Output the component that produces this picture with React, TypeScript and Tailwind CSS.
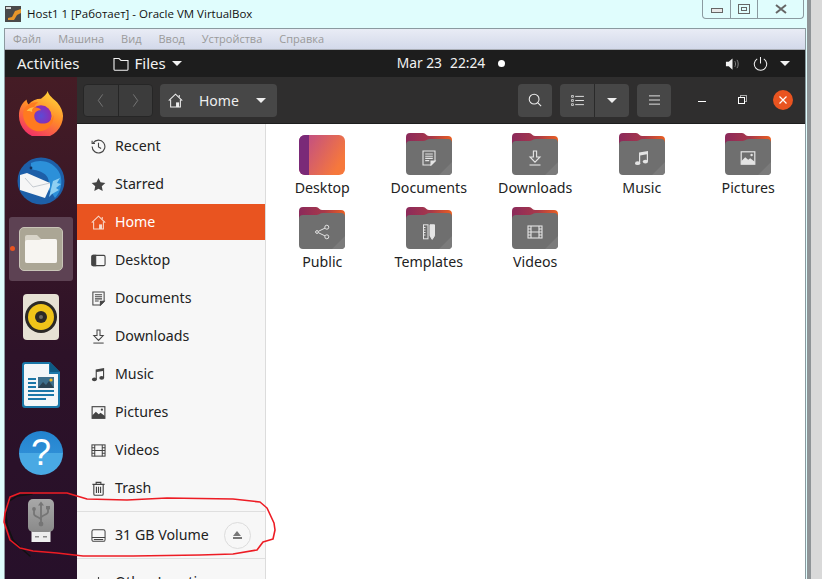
import React from 'react';

const FONT = "font-['Noto_Sans',sans-serif]";

type IconProps = { className?: string };

function HomeIcon({ className }: IconProps) {
  return (
    <svg viewBox="0 0 16 16" className={className} fill="none" stroke="currentColor" strokeWidth="1.1">
      <path d="M.8 8.2 8 1.2l7.2 7" />
      <path d="M2.8 7v8h10.4V7" />
      <path d="M12 2v2.6" />
      <rect x="8.6" y="10" width="3.2" height="5" fill="currentColor" stroke="none" />
    </svg>
  );
}

function ClockIcon({ className }: IconProps) {
  return (
    <svg viewBox="0 0 16 16" className={className} fill="none" stroke="currentColor" strokeWidth="1.2">
      <path d="M2.4 4.2A6.8 6.8 0 1 1 1.2 8" />
      <path d="M1.2 1.8v3h3" />
      <path d="M8 4v4.4l2.8 1.8" />
    </svg>
  );
}

function StarIcon({ className }: IconProps) {
  return (
    <svg viewBox="0 0 16 16" className={className} fill="currentColor">
      <path d="M8 1l2.2 4.7 5.1.6-3.8 3.5 1 5.1L8 12.4l-4.5 2.5 1-5.1L.7 6.3l5.1-.6z" />
    </svg>
  );
}

function DesktopIcon({ className }: IconProps) {
  return (
    <svg viewBox="0 0 16 16" className={className} fill="none" stroke="currentColor" strokeWidth="1.2">
      <rect x="1" y="2.5" width="14" height="11" rx="1.5" />
      <path d="M1 3.5a1 1 0 0 1 1-1h3v11H2a1 1 0 0 1-1-1z" fill="currentColor" />
    </svg>
  );
}

function DocIcon({ className }: IconProps) {
  return (
    <svg viewBox="0 0 16 16" className={className} fill="none" stroke="currentColor" strokeWidth="1.1">
      <path d="M2 1h12v10l-4 4H2z" />
      <path d="M4.2 4h7.6M4.2 6.2h7.6M4.2 8.4h7.6M4.2 10.6h4" />
      <path d="M10 15v-4h4z" fill="currentColor" />
    </svg>
  );
}

function DownloadIcon({ className }: IconProps) {
  return (
    <svg viewBox="0 0 16 16" className={className} fill="none" stroke="currentColor" strokeWidth="1.1">
      <path d="M6.4 1h3.2v6H13l-5 5.2L3 7h3.4z" />
      <path d="M2.5 15h11" />
    </svg>
  );
}

function MusicIcon({ className }: IconProps) {
  return (
    <svg viewBox="0 0 16 16" className={className} fill="currentColor">
      <path d="M5 2.6 14 1v10.6h-1.2V4.2L6.2 5.4v8H5z" />
      <ellipse cx="3.6" cy="13.2" rx="2.6" ry="1.9" />
      <ellipse cx="11.4" cy="11.6" rx="2.6" ry="1.9" />
    </svg>
  );
}

function PictureIcon({ className }: IconProps) {
  return (
    <svg viewBox="0 0 16 16" className={className} fill="none" stroke="currentColor" strokeWidth="1.2">
      <rect x="1.2" y="1.8" width="13.6" height="12.4" />
      <path d="M1.2 14.2v-3l4-4 3 2.6 2-1.6 4.6 3.6v2.4z" fill="currentColor" stroke="none" />
      <circle cx="11.6" cy="5" r="1.2" fill="currentColor" stroke="none" />
    </svg>
  );
}

function VideoIcon({ className }: IconProps) {
  return (
    <svg viewBox="0 0 16 16" className={className} fill="none" stroke="currentColor" strokeWidth="1.1">
      <rect x="1" y="2" width="14" height="12" />
      <path d="M4 2v12M12 2v12M4 8h8M1 5h3M1 8h3M1 11h3M12 5h3M12 8h3M12 11h3" />
    </svg>
  );
}

function TrashIcon({ className }: IconProps) {
  return (
    <svg viewBox="0 0 16 16" className={className} fill="none" stroke="currentColor" strokeWidth="1.2">
      <path d="M1.5 3.6h13M5.5 3.4V1.4h5v2" />
      <path d="M3 3.6v10.2c0 .8.5 1.4 1.3 1.4h7.4c.8 0 1.3-.6 1.3-1.4V3.6" />
      <path d="M5.8 6v6.8M8 6v6.8M10.2 6v6.8" />
    </svg>
  );
}

function DriveIcon({ className }: IconProps) {
  return (
    <svg viewBox="0 0 16 16" className={className} fill="none" stroke="currentColor" strokeWidth="1.1">
      <rect x="1" y="1.8" width="14" height="12.4" rx="1.8" />
      <path d="M1 10.2h14M3 12.2h10" />
    </svg>
  );
}

function ShareIcon({ className }: IconProps) {
  return (
    <svg viewBox="0 0 16 16" className={className} fill="none" stroke="currentColor" strokeWidth="1">
      <circle cx="12.8" cy="3.2" r="2" />
      <circle cx="12.8" cy="12.8" r="2" />
      <circle cx="3" cy="8" r="1.4" />
      <path d="M4.4 7.3l6.6-3.2M4.4 8.7l6.6 3.2" />
    </svg>
  );
}

function TemplateIcon({ className }: IconProps) {
  return (
    <svg viewBox="0 0 16 16" className={className} fill="none" stroke="currentColor" strokeWidth="1">
      <rect x="2.5" y=".8" width="4.5" height="14" />
      <path d="M2.5 3.5h2M2.5 6h2M2.5 8.5h2M2.5 11h2" />
      <path d="M9 .8h4.5v11L11.2 15.4 9 11.8z" fill="currentColor" />
    </svg>
  );
}

// folder in the Yaru look, tab gradient behind and grey body on top
function Folder({ id, children }: { id: string; children: React.ReactNode }) {
  return (
    <div className="relative w-[46px] h-[42px]">
      <svg viewBox="0 0 46 42" className="block w-[46px] h-[42px]">
        <defs>
          <linearGradient id={id} x1="0" x2="1" y1="0" y2="0">
            <stop offset="0" stopColor="#8b2a5b" />
            <stop offset="0.55" stopColor="#a8384a" />
            <stop offset="1" stopColor="#ea5f21" />
          </linearGradient>
        </defs>
        <path d="M0 4a4 4 0 0 1 4-4h13c3 0 3 3 6 3h19a4 4 0 0 1 4 4v12H0z" fill={`url(#${id})`} />
        <path d="M0 12a4 4 0 0 1 4-4h13c3 0 4-2 7-2h18a4 4 0 0 1 4 4v28a4 4 0 0 1-4 4H4a4 4 0 0 1-4-4z" fill="#6f6f6f" />
        <path d="M46 29v9a4 4 0 0 1-4 4h-9z" fill="#7b7b7b" />
      </svg>
      <div className="absolute left-0 right-0 top-[17px] flex justify-center text-[#e4e4e4]">{children}</div>
    </div>
  );
}

function DesktopFolder() {
  return (
    <svg viewBox="0 0 46 40" className="block w-[46px] h-[40px] mt-[2px]">
      <defs>
        <linearGradient id="dsk" x1="0" x2="1" y1="0" y2="0.5">
          <stop offset="0" stopColor="#b9488f" />
          <stop offset="1" stopColor="#f6783c" />
        </linearGradient>
      </defs>
      <rect width="46" height="40" rx="6" fill="url(#dsk)" />
      <path d="M6 0h4v40H6a6 6 0 0 1-6-6V6a6 6 0 0 1 6-6z" fill="#7a2a78" />
    </svg>
  );
}

function FirefoxLogo() {
  return (
    <svg viewBox="0 0 48 48" className="w-[46px] h-[46px]">
      <defs>
        <linearGradient id="ffa" x1="0.7" x2="0.2" y1="0" y2="1">
          <stop offset="0" stopColor="#ffd43a" />
          <stop offset="0.45" stopColor="#ff8a2a" />
          <stop offset="1" stopColor="#f0256e" />
        </linearGradient>
        <radialGradient id="ffb">
          <stop offset="0" stopColor="#5b4bd6" />
          <stop offset="1" stopColor="#8f2bb0" />
        </radialGradient>
      </defs>
      <path d="M31 1c1 5 6 8 10 12 4 5 6 10 6 14a23 23 0 0 1-46 0c0-8 3-13 8-17 0 2 1 4 2 5 3-4 8-6 13-6 3-2 6-5 7-8z" fill="url(#ffa)" />
      <circle cx="24" cy="27" r="11" fill="url(#ffb)" />
      <path d="M6 21c3-6 9-9 15-8-3 2-4 3-4 5 3 0 6 1 7 3-4 0-7 2-7 6 0 5 4 8 9 8 6 0 10-4 11-9 1 9-6 17-15 17C12 43 3 32 6 21z" fill="#ff7a1f" />
      <path d="M9 22c2-3 5-4 8-4-2 1-3 3-2 5-2-1-4-1-6-1z" fill="#ffc04a" />
    </svg>
  );
}

function ThunderbirdLogo() {
  return (
    <svg viewBox="0 0 48 48" className="w-[48px] h-[48px]">
      <circle cx="24" cy="24" r="23.5" fill="#1d5fa8" />
      <path d="M14 6c10-5 24-1 29 11 3 8 1 18-5 24-2-3-3-6-7-9 2-6 1-13-5-16-5-3-9-3-12-4z" fill="#2c90d9" />
      <path d="M36 24l7-3-3 5 4 1-5 4 3 2-7 4-3 3z" fill="#8fd0f2" />
      <path d="M3 18L10 16L33 26L33 30L28 41L3 33Z" fill="#f6f6f6" />
      <path d="M8 21L16 30L33 26" fill="none" stroke="#b8bec5" strokeWidth="0.8" />
      <circle cx="14" cy="11" r="1.4" fill="#12335e" />
    </svg>
  );
}

function FilesLogo() {
  return (
    <div className="w-[44px] h-[44px] rounded-[5px] bg-[#aba695] border border-[#c9c5b8] flex items-center justify-center">
      <svg viewBox="0 0 32 28" className="w-[32px] h-[28px]">
        <path d="M2 0h10l4 4h14a2 2 0 0 1 2 2v20a2 2 0 0 1-2 2H2a2 2 0 0 1-2-2V2a2 2 0 0 1 2-2z" fill="#d8d4c8" />
        <path d="M0 7a2 2 0 0 1 2-2h12l3-1h13a2 2 0 0 1 2 2v20a2 2 0 0 1-2 2H2a2 2 0 0 1-2-2z" fill="#f7f5f1" />
      </svg>
    </div>
  );
}

function RhythmboxLogo() {
  return (
    <svg viewBox="0 0 38 46" className="w-[38px] h-[46px]">
      <rect width="36" height="46" x="1" rx="4" fill="#e6e1d4" />
      <circle cx="19" cy="23" r="16" fill="#2b2926" />
      <circle cx="19" cy="23" r="13" fill="#f0c419" />
      <circle cx="19" cy="23" r="6" fill="#2b2926" />
      <circle cx="19" cy="23" r="2" fill="#6d6a63" />
    </svg>
  );
}

function WriterLogo() {
  return (
    <svg viewBox="0 0 38 46" className="w-[38px] h-[46px]">
      <path d="M3 0h25l10 10v33a3 3 0 0 1-3 3H3a3 3 0 0 1-3-3V3a3 3 0 0 1 3-3z" fill="#1a77a8" />
      <path d="M3 2h24v10h9v30a2 2 0 0 1-2 2H4a2 2 0 0 1-2-2V3z" fill="#f3f6f8" />
      <path d="M28 0l10 10H28z" fill="#0e5a84" />
      <path d="M6 16h8v2H6zM6 20h8v2H6zM6 24h8v2H6zM6 28h26v2H6zM6 32h26v2H6zM6 36h18v2H6z" fill="#1a77a8" />
      <rect x="16" y="15" width="16" height="11" fill="#3d6f8c" />
      <path d="M16 26l5-6 3 3 3-4 5 7z" fill="#2a4353" />
      <circle cx="29" cy="18" r="1.6" fill="#f0b51e" />
    </svg>
  );
}

function HelpLogo() {
  return (
    <div className="w-[44px] h-[44px] rounded-full bg-[linear-gradient(#2383cf_0%,#2e8ed6_50%,#49a9e4_50%,#49a9e4_100%)] flex items-center justify-center text-white text-[36px] leading-none font-['Liberation_Sans',sans-serif]">
      ?
    </div>
  );
}

function UsbLogo() {
  return (
    <svg viewBox="0 0 28 44" className="w-[28px] h-[44px]">
      <defs>
        <linearGradient id="usb" x1="0" x2="0" y1="0" y2="1">
          <stop offset="0" stopColor="#a8a8a8" />
          <stop offset="1" stopColor="#8a8a8a" />
        </linearGradient>
      </defs>
      <rect x="4.5" y="32" width="19" height="11" fill="#efefef" />
      <rect x="8" y="37" width="4" height="1.5" fill="#8b8b8b" />
      <rect x="16" y="37" width="4" height="1.5" fill="#8b8b8b" />
      <rect x="1" y="0" width="26" height="33" rx="5" fill="url(#usb)" />
      <g fill="none" stroke="#757575" strokeWidth="1.8">
        <path d="M14 5v20" />
        <path d="M7 11v4c0 3 7 3 7 6M21 10v3c0 3-7 3-7 6" />
      </g>
      <path d="M14 2.5l3 4h-6z" fill="#757575" />
      <circle cx="14" cy="25" r="2.4" fill="#757575" />
      <circle cx="7" cy="10" r="1.9" fill="#757575" />
      <rect x="19" y="7" width="4" height="3.4" fill="#757575" />
    </svg>
  );
}

const dockItems: { node: React.ReactNode; active?: boolean }[] = [
  { node: <FirefoxLogo /> },
  { node: <ThunderbirdLogo /> },
  { node: <FilesLogo />, active: true },
  { node: <RhythmboxLogo /> },
  { node: <WriterLogo /> },
  { node: <HelpLogo /> },
  { node: <UsbLogo /> },
];

const places = [
  { label: 'Recent', Icon: ClockIcon },
  { label: 'Starred', Icon: StarIcon },
  { label: 'Home', Icon: HomeIcon, active: true },
  { label: 'Desktop', Icon: DesktopIcon },
  { label: 'Documents', Icon: DocIcon },
  { label: 'Downloads', Icon: DownloadIcon },
  { label: 'Music', Icon: MusicIcon },
  { label: 'Pictures', Icon: PictureIcon },
  { label: 'Videos', Icon: VideoIcon },
  { label: 'Trash', Icon: TrashIcon },
];

const folders: { label: string; icon?: React.ReactNode }[] = [
  { label: 'Desktop' },
  { label: 'Documents', icon: <DocIcon className="w-[16px] h-[16px]" /> },
  { label: 'Downloads', icon: <DownloadIcon className="w-[16px] h-[16px]" /> },
  { label: 'Music', icon: <MusicIcon className="w-[16px] h-[16px]" /> },
  { label: 'Pictures', icon: <PictureIcon className="w-[16px] h-[16px]" /> },
  { label: 'Public', icon: <ShareIcon className="w-[16px] h-[16px]" /> },
  { label: 'Templates', icon: <TemplateIcon className="w-[16px] h-[16px]" /> },
  { label: 'Videos', icon: <VideoIcon className="w-[16px] h-[16px]" /> },
];

function Caret({ className }: IconProps) {
  return <div className={`w-0 h-0 border-x-[5px] border-x-transparent border-t-[5px] border-t-current ${className ?? ''}`} />;
}

function HeaderButton({ children, className }: { children: React.ReactNode; className?: string }) {
  return (
    <div className={`h-[33px] bg-[#474747] rounded-[4px] flex items-center justify-center text-[#eeeeee] ${className ?? ''}`}>
      {children}
    </div>
  );
}

export default function App() {
  return (
    <div className={`relative w-[822px] h-[579px] overflow-hidden bg-[#e0fdfd] ${FONT}`}>
      {/* VirtualBox window title */}
      <div className="h-[28px] flex items-start">
        <div className="flex items-center h-[28px] pl-[5px] gap-[6px] w-[697px]">
          <svg viewBox="0 0 16 16" className="w-[16px] h-[16px]">
            <rect width="16" height="16" fill="#4a4a4a" />
            <path d="M3 12l4-1 3-6 6-2v4l-4 2-3 5H3z" fill="#e8962a" />
            <rect x="1" y="1" width="5" height="2" fill="#d8d8d8" />
          </svg>
          <span className="text-[11.5px] text-[#111] font-['Open_Sans',sans-serif]">Host1 1 [Работает] - Oracle VM VirtualBox</span>
        </div>
        <div className="w-[102px] h-[19px] ml-[5px] border border-t-0 border-[#8b9aa0] rounded-b-[4px] flex items-center text-[#555]">
          <div className="w-[28px] h-full flex items-center justify-center border-r border-[#8b9aa0]">
            <div className="w-[12px] h-[5px] mt-[3px] border border-[#666] bg-[#e8e8e8]" />
          </div>
          <div className="w-[27px] h-full flex items-center justify-center border-r border-[#8b9aa0]">
            <div className="w-[12px] h-[10px] border border-[#666] flex items-center justify-center">
              <div className="w-[6px] h-[4px] border border-[#666]" />
            </div>
          </div>
          <div className="flex-1 flex items-center justify-center">
            <svg viewBox="0 0 12 10" className="w-[12px] h-[10px]" fill="none" stroke="#666" strokeWidth="2">
              <path d="M1 1l10 8M11 1L1 9" />
            </svg>
          </div>
        </div>
        <div className="w-[4px] h-[579px] ml-[3px] bg-[#8f9497]" />
        <div className="flex-1 h-[579px] bg-[#d9d9d9]" />
      </div>

      <div className="absolute left-[4px] top-[28px] w-[802px] h-[551px] border border-b-0 border-[#8b9aa0] flex flex-col">
        {/* guest menu */}
        <div className="h-[21px] bg-[linear-gradient(#e9ecf5,#d3d9ea)] flex items-center pl-[8px] gap-[17px] text-[11px] text-[#9a9a9a] border-b border-[#a9adb5]">
          {['Файл', 'Машина', 'Вид', 'Ввод', 'Устройства', 'Справка'].map((m) => (
            <span key={m} className="font-['Open_Sans',sans-serif]">{m}</span>
          ))}
        </div>

        {/* ubuntu top bar */}
        <div className="relative h-[27px] bg-[#1d1d1d] flex items-center text-[#f2f2f2] text-[15px] pl-[12px] pr-[15px]">
          <span>Activities</span>
          <svg viewBox="0 0 16 14" className="w-[16px] h-[14px] ml-[33px]" fill="none" stroke="currentColor" strokeWidth="1.1">
            <path d="M1 12.5v-11h5l2 2h7v9a1 1 0 0 1-1 .8H2a1 1 0 0 1-1-.8z" />
          </svg>
          <span className="ml-[6px]">Files</span>
          <Caret className="ml-[6px]" />
          <div className="flex-1 flex items-center pl-[215px] gap-[8px] text-[13.8px]">
            <span>Mar 23</span>
            <span>22:24</span>
            <div className="w-[7px] h-[7px] rounded-full bg-white ml-[5px]" />
          </div>
          <svg viewBox="0 0 16 14" className="w-[15px] h-[14px]" fill="currentColor">
            <path d="M1 4.5h3L8 1v12L4 9.5H1z" />
            <path d="M10.5 4c1 1.6 1 4.4 0 6M12.8 2.6c1.7 2.4 1.7 6.4 0 8.8" fill="none" stroke="#888" strokeWidth="1" />
          </svg>
          <svg viewBox="0 0 16 16" className="w-[15px] h-[15px] ml-[13px]" fill="none" stroke="currentColor" strokeWidth="1.1">
            <path d="M8 1v7M4.5 3A6.6 6.6 0 1 0 11.5 3" />
          </svg>
          <Caret className="ml-[12px]" />
        </div>

        <div className="flex-1 flex min-h-0">
          {/* dock */}
          <div className="w-[72px] shrink-0 bg-[linear-gradient(#451c25,#2d1228_55%,#27102a)] flex flex-col items-center pt-[2px]">
            {dockItems.map((item, i) => (
              <div key={i} className="relative w-[64px] h-[68px] flex items-center justify-center">
                {item.active && (
                  <>
                    <div className="absolute inset-x-0 top-[2px] bottom-[2px] rounded-[3px] bg-[#5d4253]" />
                    <div className="absolute left-[1px] top-[31px] w-[5px] h-[5px] rounded-full bg-[#e95420]" />
                  </>
                )}
                <div className="relative">{item.node}</div>
              </div>
            ))}
          </div>

          <div className="flex-1 flex flex-col min-w-0">
            {/* nautilus header */}
            <div className="h-[47px] shrink-0 bg-[#2f2e2e] border-b border-[#1e1e1e] flex items-center pl-[6px] pr-[12px]">
              <div className="h-[33px] w-[70px] flex rounded-[4px] border border-[#262626] bg-[#3c3c3c] text-[#7d7d7d]">
                <div className="flex-1 flex items-center justify-center border-r border-[#262626]">
                  <svg viewBox="0 0 8 16" className="w-[7px] h-[15px]" fill="none" stroke="currentColor"><path d="M6.5 1 1.5 8l5 7" /></svg>
                </div>
                <div className="flex-1 flex items-center justify-center">
                  <svg viewBox="0 0 8 16" className="w-[7px] h-[15px]" fill="none" stroke="currentColor"><path d="M1.5 1l5 7-5 7" /></svg>
                </div>
              </div>
              <HeaderButton className="w-[117px] ml-[7px] justify-start pl-[8px]">
                <HomeIcon className="w-[15px] h-[15px]" />
                <span className="ml-[16px] text-[14px]">Home</span>
                <Caret className="ml-[17px]" />
              </HeaderButton>
              <HeaderButton className="w-[34px] ml-[241px]">
                <svg viewBox="0 0 16 16" className="w-[14px] h-[14px]" fill="none" stroke="currentColor" strokeWidth="1.2">
                  <circle cx="7" cy="7" r="5.6" />
                  <path d="M11 11l4 4" />
                </svg>
              </HeaderButton>
              <div className="h-[33px] w-[69px] ml-[8px] flex rounded-[4px] bg-[#474747] text-[#eeeeee]">
                <div className="flex-1 flex items-center justify-center border-r border-[#2a2a2a]">
                  <svg viewBox="0 0 14 12" className="w-[13px] h-[11px]" fill="none" stroke="currentColor">
                    <path d="M4.5 1.5H14M4.5 6H14M4.5 10.5H14" />
                    <path d="M.5.5h2v2h-2zM.5 5h2v2h-2zM.5 9.5h2v2h-2z" strokeWidth="0.8" />
                  </svg>
                </div>
                <div className="flex-1 flex items-center justify-center"><Caret /></div>
              </div>
              <HeaderButton className="w-[34px] ml-[8px]">
                <svg viewBox="0 0 12 10" className="w-[11px] h-[10px]" fill="none" stroke="currentColor"><path d="M0 .5h12M0 5h12M0 9.5h12" /></svg>
              </HeaderButton>
              <div className="w-[8px] h-[1px] bg-white ml-[27px] mt-[2px]" />
              <div className="relative w-[9px] h-[9px] ml-[32px]">
                <div className="absolute left-[2px] top-[-1px] w-[7px] h-[7px] border border-[#aaa]" />
                <div className="absolute left-0 top-[1px] w-[7px] h-[7px] border border-white bg-[#2f2e2e]" />
              </div>
              <div className="w-[20px] h-[20px] ml-[26px] rounded-full bg-[#e95420] flex items-center justify-center">
                <svg viewBox="0 0 8 8" className="w-[8px] h-[8px]" fill="none" stroke="white" strokeWidth="1.2"><path d="M.5.5l7 7M7.5.5l-7 7" /></svg>
              </div>
            </div>

            <div className="flex-1 flex min-h-0">
              {/* places sidebar */}
              <div className="w-[189px] shrink-0 bg-[#f7f7f7] border-r border-[#dcdcdc] flex flex-col pt-[3px] text-[14.2px] text-[#222]">
                {places.map(({ label, Icon, active }) => (
                  <div
                    key={label}
                    className={`h-[36px] my-[1px] shrink-0 flex items-center pl-[14px] ${active ? 'bg-[#e95420] text-white' : ''}`}
                  >
                    <Icon className={`w-[15px] h-[15px] ${active ? 'text-[#f8d9cc]' : 'text-[#444]'}`} />
                    <span className="ml-[9px]">{label}</span>
                  </div>
                ))}
                <div className="mt-[4px] h-[1px] shrink-0 bg-[#dfdfdf]" />
                <div className="h-[46px] shrink-0 flex items-center pl-[14px]">
                  <DriveIcon className="w-[15px] h-[15px] text-[#444]" />
                  <span className="ml-[9px]">31 GB Volume</span>
                  <div className="ml-[15px] w-[27px] h-[27px] rounded-full border border-[#dcdcdc] flex flex-col items-center justify-center">
                    <div className="w-0 h-0 border-x-[4.5px] border-x-transparent border-b-[5px] border-b-[#777]" />
                    <div className="w-[9px] h-[2px] bg-[#777] mt-[1px]" />
                  </div>
                </div>
                <div className="h-[1px] shrink-0 bg-[#dfdfdf]" />
                <div className="h-[46px] shrink-0 flex items-center pl-[14px]">
                  <svg viewBox="0 0 16 16" className="w-[15px] h-[15px] text-[#444]" fill="none" stroke="currentColor" strokeWidth="1.2"><path d="M8 2v12M2 8h12" /></svg>
                  <span className="ml-[9px]">Other Locations</span>
                </div>
              </div>

              {/* file grid */}
              <div className="flex-1 bg-white pl-[3px] pt-[9px] text-[14.2px] leading-[19px] text-[#222]">
                <div className="grid grid-cols-[repeat(5,106.5px)] auto-rows-[74px]">
                  {folders.map(({ label, icon }) => (
                    <div key={label} className="flex flex-col items-center">
                      {icon ? <Folder id={`f-${label}`}>{icon}</Folder> : <DesktopFolder />}
                      <span className="mt-[3px]">{label}</span>
                    </div>
                  ))}
                </div>
              </div>
            </div>
          </div>
        </div>
      </div>

      {/* hand drawn marks on the screenshot */}
      <svg viewBox="0 0 822 579" className="absolute inset-0 w-[822px] h-[579px] pointer-events-none" fill="none" strokeLinejoin="round" strokeLinecap="round">
        <path d="M32 494L17 496L8 502L6 513L7 525L13 540L23 550L30 556" stroke="#111" strokeWidth="1.5" />
        <path
          d="M5 513L4 522L10 540L20 548L33 551L57 553L83 556L133 556L200 555L233 554L257 550L263 542L273 539L275 530L274 523L267 508L260 502L233 499L167 498L127 500L87 499L67 493L20 493L10 497Z"
          stroke="#ed1c24"
          strokeWidth="1.6"
        />
      </svg>
    </div>
  );
}
